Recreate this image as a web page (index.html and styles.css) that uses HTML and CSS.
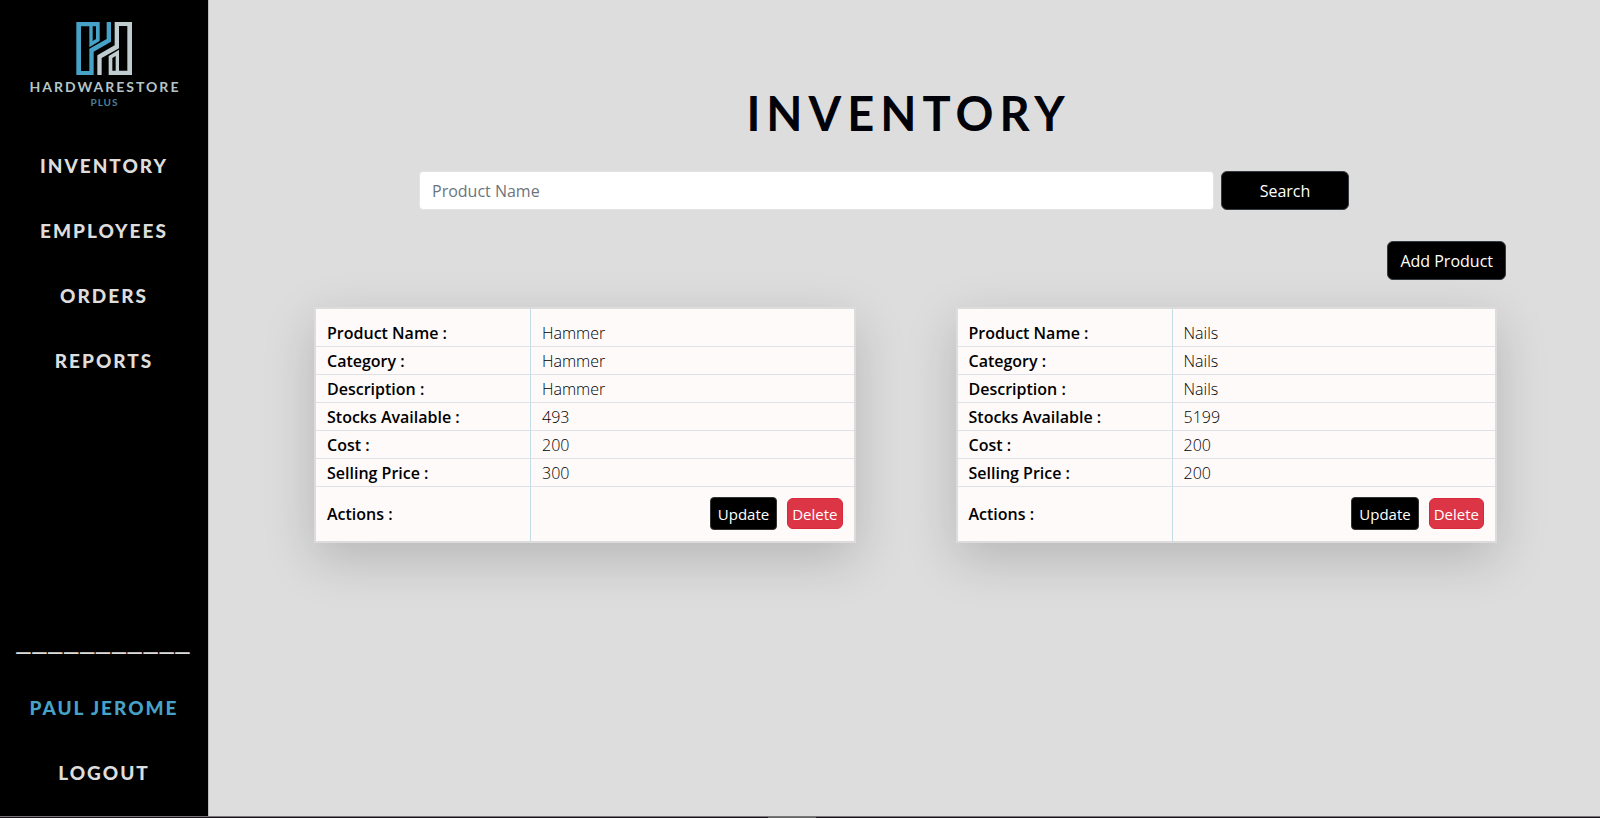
FILE: index.html
```html
<!DOCTYPE html>
<html lang="en">
<head>
<meta charset="utf-8">
<title>Inventory</title>
<link rel="stylesheet" href="styles.css">
</head>
<body>
<div class="app">
  <aside class="sidebar">
    <a class="brand" href="#">
      <svg class="brand-mark" viewBox="228 66 168 159" aria-hidden="true">
        <g fill-rule="evenodd">
          <path class="mark-blue" d="M299 66H229V225H281V155L333 125V66H320V117L268 146V213H243V79H268V142L299 123ZM278 79H288V117L278 123Z"/>
          <path class="mark-gray" transform="rotate(180 312.500 145.500)" d="M299 66H229V225H281V155L333 125V66H320V117L268 146V213H243V79H268V142L299 123ZM278 79H288V117L278 123Z"/>
        </g>
      </svg>
      <span class="brand-name">HARDWARESTORE</span>
      <span class="brand-sub">PLUS</span>
    </a>
    <nav class="menu">
      <a href="#">INVENTORY</a>
      <a href="#">EMPLOYEES</a>
      <a href="#">ORDERS</a>
      <a href="#">REPORTS</a>
    </nav>
    <div class="menu account">
      <span class="rule">___________</span>
      <a class="user" href="#">PAUL JEROME</a>
      <a href="#">LOGOUT</a>
    </div>
  </aside>
  <main class="content">
    <h1 class="title">INVENTORY</h1>
    <form class="search">
      <input class="search-input" type="text" placeholder="Product Name" aria-label="Product Name">
      <button class="btn search-btn" type="button">Search</button>
    </form>
    <div class="toolbar"><button class="btn" type="button">Add Product</button></div>
    <div class="cards">
      <table class="card">
        <tr><th scope="row">Product Name :</th><td>Hammer</td></tr>
        <tr><th scope="row">Category :</th><td>Hammer</td></tr>
        <tr><th scope="row">Description :</th><td>Hammer</td></tr>
        <tr><th scope="row">Stocks Available :</th><td>493</td></tr>
        <tr><th scope="row">Cost :</th><td>200</td></tr>
        <tr><th scope="row">Selling Price :</th><td>300</td></tr>
        <tr><th scope="row">Actions :</th><td><div class="actions"><button class="update" type="button">Update</button><button class="delete" type="button">Delete</button></div></td></tr>
      </table>
      <table class="card">
        <tr><th scope="row">Product Name :</th><td>Nails</td></tr>
        <tr><th scope="row">Category :</th><td>Nails</td></tr>
        <tr><th scope="row">Description :</th><td>Nails</td></tr>
        <tr><th scope="row">Stocks Available :</th><td>5199</td></tr>
        <tr><th scope="row">Cost :</th><td>200</td></tr>
        <tr><th scope="row">Selling Price :</th><td>200</td></tr>
        <tr><th scope="row">Actions :</th><td><div class="actions"><button class="update" type="button">Update</button><button class="delete" type="button">Delete</button></div></td></tr>
      </table>
    </div>
  </main>
</div>
<div class="edge"></div>
</body>
</html>
```

FILE: styles.css
```css
* { box-sizing: border-box; }

body {
  margin: 0;
  background: #ddd;
  color: #000;
  font: 16px/24px "Open Sans", "Noto Sans", sans-serif;
}

a { color: inherit; text-decoration: none; }
button, input { font: inherit; }

.app { display: flex; min-height: 100vh; }

/* Sidebar */
.sidebar {
  display: flex;
  flex-direction: column;
  flex: 0 0 13%;
  padding: 22px 0 13px;
  background: #000;
  color: #ddd;
  box-shadow: 1px 0 0 #bbb;
  font-family: Lato, sans-serif;
  font-weight: 900;
  text-align: center;
}

.brand { display: flex; flex-direction: column; align-items: center; margin-bottom: 25px; }
.brand-mark { width: 56px; height: 53px; }
.mark-blue { fill: #47a2c8; }
.mark-gray { fill: #bfcdd0; }
.brand-name { margin-top: 4px; padding-left: 2px; color: #b5c5c7; font-size: 14px; line-height: 16px; font-weight: 700; letter-spacing: 2px; }
.brand-sub { margin-top: 1px; padding-left: 1px; color: #4c8198; font-size: 10px; line-height: 12px; font-weight: 700; letter-spacing: 1px; }

.menu { display: flex; flex-direction: column; font-size: 19px; line-height: 25px; letter-spacing: 2px; }
.menu > * { padding: 20px 0; }
.account { margin-top: auto; }
.user { color: #47a2c8; }
.menu > .rule { padding: 17px 0 22px; font-family: "Liberation Sans", sans-serif; font-size: 25px; font-weight: 400; letter-spacing: 2px; }

/* Content */
.content { flex: 1; min-width: 0; padding-top: 84px; }

.title {
  margin: 0;
  padding-left: 9px;
  font: 700 47px/58px Lato, sans-serif;
  color: #02020a;
  letter-spacing: 6px;
  text-align: center;
}

.search { display: flex; gap: 7px; margin: 29px 251px 0 211px; }
.search-input {
  flex: 1;
  min-width: 0;
  height: 39px;
  padding: 7px 12px 6px;
  border: 1px solid #e4e4e4;
  border-radius: 4px;
  background: #fff;
}
.search-input::placeholder { color: #6c757d; opacity: 1; }

.btn {
  height: 39px;
  padding: 1px 12px 0;
  border: 1px solid #343a40;
  border-radius: 6px;
  background: #000;
  color: #fff;
}
.search-btn { width: 128px; }

.toolbar { display: flex; justify-content: flex-end; margin: 31px 94px 0 0; }

.cards { display: grid; grid-template-columns: 1fr 1fr; gap: 100px; padding: 27px 103px 60px 106px; }

.card {
  width: 100%;
  table-layout: fixed;
  border: 2px solid #dcdcdc;
  border-spacing: 0;
  background: #fffafa;
  box-shadow: 0 16px 48px rgba(0, 0, 0, .175);
}
.card th, .card td {
  padding: 2px 11px 1px;
  border-bottom: 1px solid #dee2e6;
  text-align: left;
  font-weight: 300;
}
.card th { width: 40%; border-right: 1px solid #c3dde6; font-weight: 600; }
.card tr:first-child > * { padding-top: 12px; }
.card tr:last-child > * { padding-top: 10px; padding-bottom: 11px; border-bottom: 0; }

.actions { display: flex; justify-content: flex-end; align-items: center; gap: 10px; }
.update, .delete { border: 1px solid #333; font-size: 15px; font-weight: 400; line-height: 20px; color: #fff; }
.update { height: 33px; padding: 0 7px; border-radius: 4px; background: #000; }
.delete { height: 31px; padding: 0 4px; border-radius: 6px; border-color: #d8283a; background: #dc3545; }

/* Window edge along the bottom */
.edge {
  position: fixed;
  inset: auto 0 0;
  height: 2px;
  border-top: 1px solid #777;
  background: linear-gradient(90deg, #1a1219 48%, #666 48%, #666 51%, #1a1219 51%);
}
```
